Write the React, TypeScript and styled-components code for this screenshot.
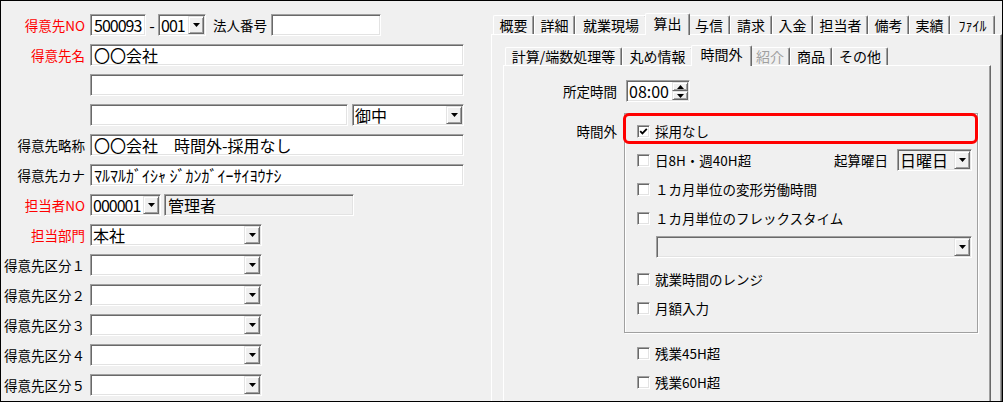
import React from "react";
import styled, { createGlobalStyle, css } from "styled-components";

const GlobalStyle = createGlobalStyle`
  html, body { margin: 0; padding: 0; background: #f0f0f0; }
  body {
    font-family: "Noto Sans CJK JP", "Noto Sans", sans-serif;
    font-size: 13.5px;
    color: #000;
  }
  * { box-sizing: border-box; }
`;

const sunken = css`
  border: 1px solid;
  border-color: #a0a0a0 #fff #fff #a0a0a0;
  box-shadow: inset 1px 1px 0 #696969, inset -1px -1px 0 #e3e3e3;
`;

const raised = css`
  border: 1px solid;
  border-color: #e3e3e3 #696969 #696969 #e3e3e3;
  box-shadow: inset 1px 1px 0 #fff, inset -1px -1px 0 #a0a0a0;
  background: #f0f0f0;
`;

const Window = styled.div`
  width: 1003px;
  height: 402px;
  border: 1px solid #000;
  background: #f0f0f0;
  display: flex;
  overflow: hidden;
`;

/* ---------- left form ---------- */

const LeftPane = styled.div`
  width: 490px;
  flex-shrink: 0;
  padding-top: 13px;
  display: flex;
  flex-direction: column;
  gap: 8px;
`;

const FormRow = styled.div`
  display: flex;
  align-items: center;
  height: 22px;
`;

const FieldLabel = styled.div<{ $red?: boolean }>`
  width: 84px;
  margin-right: 5px;
  text-align: right;
  white-space: nowrap;
  color: ${(p) => (p.$red ? "#ff0000" : "#000")};
`;

const TextBox = styled.div<{ $w: number; $gray?: boolean; $tight?: boolean }>`
  ${sunken};
  width: ${(p) => p.$w}px;
  height: 22px;
  padding: 0 3px;
  font-size: 16px;
  line-height: 20px;
  letter-spacing: ${(p) => (p.$tight ? "-1px" : "0")};
  white-space: nowrap;
  background: ${(p) => (p.$gray ? "#f0f0f0" : "#fff")};
`;

const ComboBox = styled.div<{ $w?: number; $gray?: boolean }>`
  ${sunken};
  width: ${(p) => (p.$w ? `${p.$w}px` : "auto")};
  flex: ${(p) => (p.$w ? "none" : "1")};
  height: 22px;
  padding: 1px;
  display: flex;
  background: ${(p) => (p.$gray ? "#f0f0f0" : "#fff")};
`;

const ComboText = styled.div<{ $tight?: boolean }>`
  flex: 1;
  padding-left: 1px;
  font-size: 16px;
  line-height: 18px;
  letter-spacing: ${(p) => (p.$tight ? "-1px" : "0")};
  white-space: nowrap;
`;

const DropButton = styled.div`
  ${raised};
  width: 16px;
  height: 18px;
  flex-shrink: 0;
  display: flex;
  align-items: center;
  justify-content: center;
`;

const Dash = styled.div`
  width: 12px;
  text-align: center;
  font-size: 16px;
`;

const InlineLabel = styled.div`
  margin: 0 4px 0 7px;
  white-space: nowrap;
`;

const Gap = styled.div<{ $w: number }>`
  width: ${(p) => p.$w}px;
`;

const Arrow = ({ up }: { up?: boolean }) => (
  <svg width="7" height="4" viewBox="0 0 7 4" style={{ display: "block" }}>
    <path d={up ? "M0 4h7L3.5 0z" : "M0 0h7L3.5 4z"} fill="#000" />
  </svg>
);

const Combo = ({
  w,
  text,
  gray,
  tight,
}: {
  w?: number;
  text?: string;
  gray?: boolean;
  tight?: boolean;
}) => (
  <ComboBox $w={w} $gray={gray}>
    <ComboText $tight={tight}>{text}</ComboText>
    <DropButton>
      <Arrow />
    </DropButton>
  </ComboBox>
);

/* ---------- tabs ---------- */

const RightPane = styled.div`
  flex: 1;
  display: flex;
  flex-direction: column;
  padding-top: 13px;
`;

const TabStrip = styled.div<{ $h: number }>`
  display: flex;
  align-items: flex-end;
  height: ${(p) => p.$h}px;
  padding-left: 2px;
  flex-shrink: 0;
`;

const Tab = styled.div<{ $w: number; $h: number; $active?: boolean; $disabled?: boolean }>`
  flex-shrink: 0;
  width: ${(p) => p.$w}px;
  height: ${(p) => p.$h}px;
  border-top: 1px solid #fff;
  border-left: 1px solid #fff;
  border-right: 1px solid #696969;
  box-shadow: inset -1px 0 0 #a0a0a0;
  border-radius: 2px 2px 0 0;
  text-align: center;
  font-size: 14px;
  line-height: ${(p) => p.$h - 1}px;
  white-space: nowrap;
  background: #f0f0f0;
  color: ${(p) => (p.$disabled ? "#a0a0a0" : "#000")};
  ${(p) =>
    p.$active &&
    css`
      width: ${p.$w + 4}px;
      height: ${p.$h + 3}px;
      margin: 0 -2px -1px;
      line-height: ${p.$h - 1}px;
      position: relative;
      z-index: 1;
    `}
`;

const OuterPanel = styled.div`
  flex: 1;
  border-top: 1px solid #fff;
  border-left: 1px solid #fff;
  border-right: 1px solid #696969;
  box-shadow: inset -1px 0 0 #a0a0a0;
  padding: 11px 10px 0 11px;
  display: flex;
  flex-direction: column;
`;

const InnerPanel = styled.div`
  flex: 1;
  border-top: 1px solid #fff;
  border-left: 1px solid #fff;
  border-right: 1px solid #696969;
  box-shadow: inset -1px 0 0 #a0a0a0;
  padding-top: 14px;
  display: flex;
  flex-direction: column;
`;

/* ---------- 時間外 page ---------- */

const SettingRow = styled.div<{ $top?: number }>`
  display: flex;
  align-items: flex-start;
  margin-top: ${(p) => p.$top ?? 0}px;
`;

const SideLabel = styled.div<{ $pad?: number }>`
  width: 113px;
  text-align: right;
  line-height: 22px;
  padding-top: ${(p) => p.$pad ?? 0}px;
  white-space: nowrap;
`;

const SpinBox = styled.div`
  ${sunken};
  margin-left: 9px;
  width: 64px;
  height: 22px;
  padding: 1px;
  display: flex;
  background: #fff;
`;

const SpinButtons = styled.div`
  width: 16px;
  display: flex;
  flex-direction: column;
`;

const SpinButton = styled.div`
  ${raised};
  height: 9px;
  display: flex;
  align-items: center;
  justify-content: center;
`;

const GroupColumn = styled.div`
  margin-left: 7px;
  display: flex;
  flex-direction: column;
  gap: 7px;
`;

const GroupBox = styled.div`
  position: relative;
  width: 354px;
  border: 1px solid #a0a0a0;
  box-shadow: inset 1px 1px 0 #fff, 1px 1px 0 #fff;
  padding: 6px 5px 13px 12px;
  display: flex;
  flex-direction: column;
  gap: 7px;
  margin-bottom: 2px;
`;

const Highlight = styled.div`
  position: absolute;
  top: -1px;
  left: -2px;
  right: -1px;
  height: 31px;
  border: 3px solid #ff0000;
  border-radius: 6px;
  pointer-events: none;
`;

const CheckRow = styled.div<{ $indent?: number; $extra?: number }>`
  display: flex;
  align-items: center;
  height: 22px;
  padding-left: ${(p) => p.$indent ?? 0}px;
  margin-bottom: ${(p) => p.$extra ?? 0}px;
  white-space: nowrap;
`;

const Box = styled.div`
  ${sunken};
  width: 13px;
  height: 13px;
  margin-right: 5px;
  background: #fff;
  flex-shrink: 0;
  display: flex;
  align-items: center;
  justify-content: center;
`;

const TrailLabel = styled.div`
  margin-left: auto;
  margin-right: 9px;
`;

const Check = ({ checked, children }: { checked?: boolean; children: React.ReactNode }) => (
  <>
    <Box>
      {checked && (
        <svg width="9" height="9" viewBox="0 0 9 9" style={{ display: "block" }}>
          <path d="M1.2 4.2 L3.4 6.4 L7.8 1.8" stroke="#000" strokeWidth="1.8" fill="none" />
        </svg>
      )}
    </Box>
    <span>{children}</span>
  </>
);

const outerTabs: [string, number][] = [
  ["概要", 41],
  ["詳細", 41],
  ["就業現場", 72],
  ["算出", 41],
  ["与信", 42],
  ["請求", 42],
  ["入金", 41],
  ["担当者", 55],
  ["備考", 41],
  ["実績", 41],
  ["ﾌｧｲﾙ", 45],
];

const innerTabs: [string, number][] = [
  ["計算/端数処理等", 117],
  ["丸め情報", 71],
  ["時間外", 57],
  ["紹介", 40],
  ["商品", 42],
  ["その他", 56],
];

export default function App() {
  return (
    <>
      <GlobalStyle />
      <Window>
        <LeftPane>
          <FormRow>
            <FieldLabel $red>得意先NO</FieldLabel>
            <TextBox $w={56} $tight>
              500093
            </TextBox>
            <Dash>-</Dash>
            <Combo w={48} text="001" tight />
            <InlineLabel>法人番号</InlineLabel>
            <TextBox $w={110} />
          </FormRow>
          <FormRow>
            <FieldLabel $red>得意先名</FieldLabel>
            <TextBox $w={374}>〇〇会社</TextBox>
          </FormRow>
          <FormRow>
            <FieldLabel />
            <TextBox $w={374} />
          </FormRow>
          <FormRow>
            <FieldLabel />
            <TextBox $w={258} />
            <Gap $w={4} />
            <Combo w={112} text="御中" />
          </FormRow>
          <FormRow>
            <FieldLabel>得意先略称</FieldLabel>
            <TextBox $w={374}>〇〇会社　時間外-採用なし</TextBox>
          </FormRow>
          <FormRow>
            <FieldLabel>得意先カナ</FieldLabel>
            <TextBox $w={374}>ﾏﾙﾏﾙｶﾞｲｼｬ ｼﾞｶﾝｶﾞｲｰｻｲﾖｳﾅｼ</TextBox>
          </FormRow>
          <FormRow>
            <FieldLabel $red>担当者NO</FieldLabel>
            <Combo w={71} text="000001" tight />
            <Gap $w={3} />
            <TextBox $w={190} $gray>
              管理者
            </TextBox>
          </FormRow>
          <FormRow>
            <FieldLabel $red>担当部門</FieldLabel>
            <Combo w={172} text="本社" />
          </FormRow>
          {["１", "２", "３", "４", "５"].map((n) => (
            <FormRow key={n}>
              <FieldLabel>得意先区分{n}</FieldLabel>
              <Combo w={172} />
            </FormRow>
          ))}
        </LeftPane>

        <RightPane>
          <TabStrip $h={20}>
            {outerTabs.map(([label, w]) => (
              <Tab key={label} $w={w} $h={19} $active={label === "算出"}>
                {label}
              </Tab>
            ))}
          </TabStrip>
          <OuterPanel>
            <TabStrip $h={19}>
              {innerTabs.map(([label, w]) => (
                <Tab
                  key={label}
                  $w={w}
                  $h={18}
                  $active={label === "時間外"}
                  $disabled={label === "紹介"}
                >
                  {label}
                </Tab>
              ))}
            </TabStrip>
            <InnerPanel>
              <SettingRow>
                <SideLabel>所定時間</SideLabel>
                <SpinBox>
                  <ComboText>08:00</ComboText>
                  <SpinButtons>
                    <SpinButton>
                      <Arrow up />
                    </SpinButton>
                    <SpinButton>
                      <Arrow />
                    </SpinButton>
                  </SpinButtons>
                </SpinBox>
              </SettingRow>

              <SettingRow $top={11}>
                <SideLabel $pad={7}>時間外</SideLabel>
                <GroupColumn>
                  <GroupBox>
                    <Highlight />
                    <CheckRow>
                      <Check checked>採用なし</Check>
                    </CheckRow>
                    <CheckRow>
                      <Check>日8H・週40H超</Check>
                      <TrailLabel>起算曜日</TrailLabel>
                      <Combo w={75} text="日曜日" gray />
                    </CheckRow>
                    <CheckRow>
                      <Check>１カ月単位の変形労働時間</Check>
                    </CheckRow>
                    <CheckRow>
                      <Check>１カ月単位のフレックスタイム</Check>
                    </CheckRow>
                    <CheckRow $indent={19} $extra={3}>
                      <Combo gray />
                    </CheckRow>
                    <CheckRow>
                      <Check>就業時間のレンジ</Check>
                    </CheckRow>
                    <CheckRow>
                      <Check>月額入力</Check>
                    </CheckRow>
                  </GroupBox>
                  <CheckRow $indent={13}>
                    <Check>残業45H超</Check>
                  </CheckRow>
                  <CheckRow $indent={13}>
                    <Check>残業60H超</Check>
                  </CheckRow>
                </GroupColumn>
              </SettingRow>
            </InnerPanel>
          </OuterPanel>
        </RightPane>
      </Window>
    </>
  );
}
